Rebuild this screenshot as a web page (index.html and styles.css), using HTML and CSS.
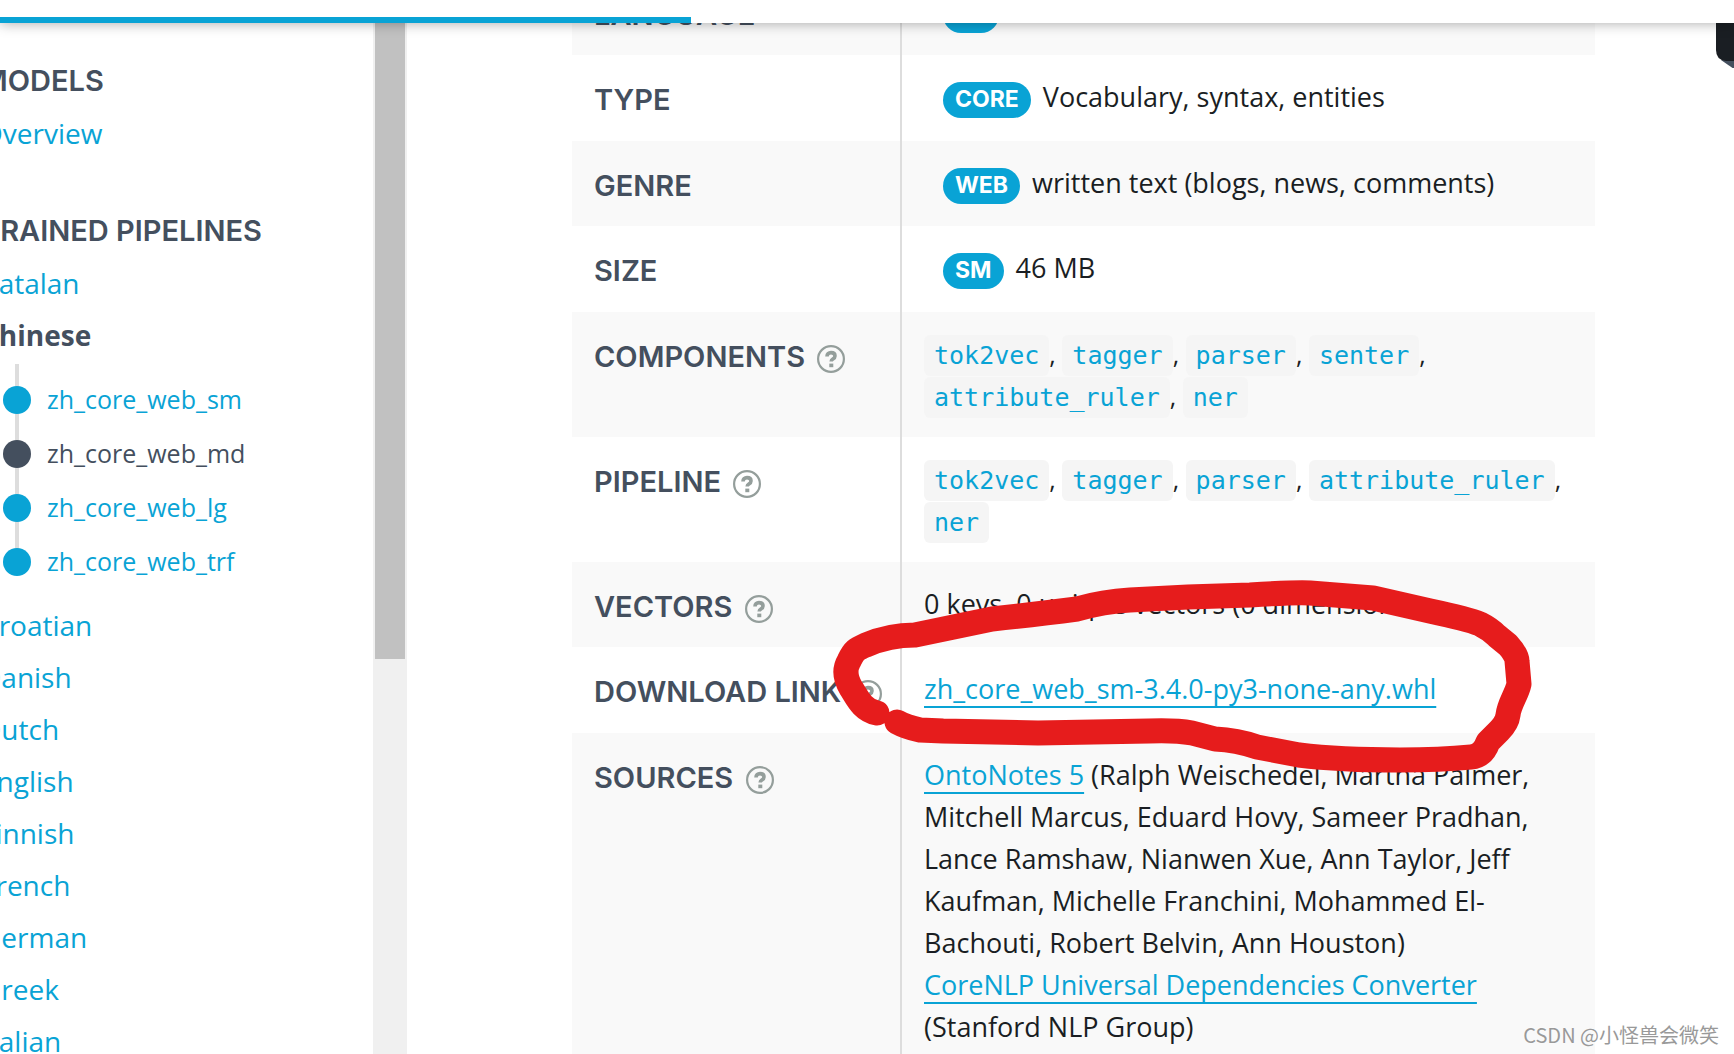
FILE: index.html
```html
<!DOCTYPE html>
<html lang="en">
<head>
<meta charset="utf-8">
<title>Chinese · spaCy Models Documentation</title>
<link rel="stylesheet" href="styles.css">
</head>
<body>
<svg class="defs" aria-hidden="true">
  <symbol id="help" viewBox="0 0 28 28">
    <circle cx="14" cy="14" r="12.9" fill="none" stroke="currentColor" stroke-width="2.2"/>
    <path d="M10 11.4c0-2.3 1.6-3.8 4-3.8s4 1.3 4 3.3c0 1.6-.9 2.4-2.1 3.2-1.2.8-1.7 1.2-1.7 2.5" fill="none" stroke="currentColor" stroke-width="3.6"/>
    <path d="M12.3 18.6h4v3.6h-4z" fill="currentColor"/>
  </symbol>
</svg>
<div class="page">
  <header class="header"><div class="progress"></div></header>
  <div class="body">
    <aside class="sidebar">
      <nav class="menu">
        <h2 class="menu-title">Models</h2>
        <ul class="menu-list">
          <li><a href="#overview">Overview</a></li>
        </ul>
        <h2 class="menu-title">Trained Pipelines</h2>
        <ul class="menu-list">
          <li><a href="#ca">Catalan</a></li>
          <li><a class="active" href="#zh">Chinese</a>
            <ul class="crumbs">
              <li><a href="#zh_core_web_sm">zh_core_web_sm</a></li>
              <li><a class="current" href="#zh_core_web_md">zh_core_web_md</a></li>
              <li><a href="#zh_core_web_lg">zh_core_web_lg</a></li>
              <li><a href="#zh_core_web_trf">zh_core_web_trf</a></li>
            </ul>
          </li>
          <li><a href="#hr">Croatian</a></li>
          <li><a href="#da">Danish</a></li>
          <li><a href="#nl">Dutch</a></li>
          <li><a href="#en">English</a></li>
          <li><a href="#fi">Finnish</a></li>
          <li><a href="#fr">French</a></li>
          <li><a href="#de">German</a></li>
          <li><a href="#el">Greek</a></li>
          <li><a href="#it">Italian</a></li>
        </ul>
      </nav>
      <div class="scrollbar"><div class="thumb"></div></div>
    </aside>
    <main class="main">
      <table class="table">
        <tbody>
        <tr><th scope="row">Language</th><td><span class="tag">ZH</span></td></tr>
        <tr><th scope="row">Type</th><td><span class="tag">Core</span> Vocabulary, syntax, entities</td></tr>
        <tr><th scope="row">Genre</th><td><span class="tag">Web</span> written text (blogs, news, comments)</td></tr>
        <tr><th scope="row">Size</th><td><span class="tag">SM</span> 46 MB</td></tr>
        <tr class="codes"><th scope="row">Components <svg class="help"><use href="#help"/></svg></th>
          <td><a href="#tok2vec"><code>tok2vec</code></a>, <a href="#tagger"><code>tagger</code></a>, <a href="#parser"><code>parser</code></a>, <a href="#senter"><code>senter</code></a>, <a href="#attribute_ruler"><code>attribute_ruler</code></a>, <a href="#ner"><code>ner</code></a></td></tr>
        <tr class="codes"><th scope="row">Pipeline <svg class="help"><use href="#help"/></svg></th>
          <td><a href="#tok2vec"><code>tok2vec</code></a>, <a href="#tagger"><code>tagger</code></a>, <a href="#parser"><code>parser</code></a>, <a href="#attribute_ruler"><code>attribute_ruler</code></a>, <a href="#ner"><code>ner</code></a></td></tr>
        <tr><th scope="row">Vectors <svg class="help"><use href="#help"/></svg></th><td>0 keys, 0 unique vectors (0 dimensions)</td></tr>
        <tr><th scope="row">Download Link <svg class="help"><use href="#help"/></svg></th><td><a class="link" href="#download">zh_core_web_sm-3.4.0-py3-none-any.whl</a></td></tr>
        <tr><th scope="row">Sources <svg class="help"><use href="#help"/></svg></th>
          <td><a class="link" href="#ontonotes">OntoNotes 5</a> (Ralph Weischedel, Martha Palmer, Mitchell Marcus, Eduard Hovy, Sameer Pradhan, Lance Ramshaw, Nianwen Xue, Ann Taylor, Jeff Kaufman, Michelle Franchini, Mohammed El-Bachouti, Robert Belvin, Ann Houston)<br><a class="link" href="#corenlp">CoreNLP Universal Dependencies Converter</a> (Stanford NLP Group)</td></tr>
        </tbody>
      </table>
      <svg class="marker" viewBox="820 570 724 210" aria-hidden="true">
        <path d="M877 713C862 710 857 697 851 688Q842 673 849 661C854 650 857 649 866 645Q889 635 915 635L992 619Q1038 614 1077 609C1098 603 1112 601 1130 600L1188 597L1250 595Q1299 592 1310 593L1373 598L1430 611Q1468 619 1480 624Q1490 629 1497 636L1508 645Q1517 655 1517 661L1519 684C1517 694 1509 704 1508 715Q1507 723 1499 731L1488 742Q1483 756 1471 757Q1440 760 1400 760Q1340 760 1299 755L1257 747Q1237 740 1215 739L1192 733Q1175 730 1149 731L1038 733L943 731L920 730Q906 727 897 722"/>
      </svg>
    </main>
  </div>
  <div class="ribbon"><svg viewBox="0 0 18 45"><path d="M5 37h13v9z" fill="#444f5e"/><path d="M0 0h18v38H10Q0 37 0 27z" fill="#1a1e23"/></svg></div>
  <div class="watermark">CSDN @小怪兽会微笑</div>
</div>
</body>
</html>
```
FILE: styles.css
```css
* { box-sizing: border-box; }

body {
  margin: 0;
  background: #fff;
  color: #1a1e23;
  font-family: "Open Sans", "Noto Sans", sans-serif;
  font-size: 27px;
  line-height: 42px;
}

a { color: #09a3d5; text-decoration: none; }
ul { list-style: none; margin: 0; padding: 0; }
.defs { display: none; }

.page {
  position: relative;
  display: flex;
  flex-direction: column;
  height: 100vh;
  overflow: hidden;
}

.header {
  flex: none;
  position: relative;
  z-index: 2;
  height: 23px;
  padding-top: 17px;
  background: #fff;
  box-shadow: 0 0 14px rgba(0, 0, 0, 0.35);
}
.progress { width: 691px; height: 6px; background: #09a3d5; }

.body { display: flex; flex: 1; min-height: 0; }

/* Sidebar */
.sidebar { display: flex; flex: none; width: 407px; overflow: hidden; }
.menu { flex: 1; margin-left: -19px; padding-top: 32px; }
.menu-title {
  margin: 0;
  color: #444f5e;
  font: 600 29px/52px Inter, sans-serif;
  text-transform: uppercase;
}
.menu-list { margin-bottom: 46px; font-size: 28px; line-height: 52px; }
.menu-list .active { color: #444f5e; font-weight: 700; }
.crumbs {
  position: relative;
  margin: 3px 0 11px 34px;
  padding: 8px 0 0 32px;
  font-size: 25px;
  line-height: 54px;
}
.crumbs::before {
  content: "";
  position: absolute;
  left: 0;
  top: 0;
  bottom: 27px;
  width: 4px;
  background: #ddd;
}
.crumbs a { position: relative; }
.crumbs a::before {
  content: "";
  position: absolute;
  left: -44px;
  top: 4px;
  width: 28px;
  height: 28px;
  border-radius: 50%;
  background: #09a3d5;
}
.crumbs .current { color: #444f5e; }
.crumbs .current::before { background: #444f5e; }

.scrollbar { flex: none; width: 34px; padding: 0 2px; background: #f0f0f0; }
.thumb { height: 636px; background: #c1c1c1; }

/* Model details */
.main { position: relative; flex: 1; padding: 0 139px 0 165px; }
.table { width: 100%; margin-top: -53px; border-collapse: collapse; }
.table tr:nth-child(odd) { background: #f9f9f9; }
.table td { padding: 21px 22px 23px; vertical-align: top; }
.table tr:nth-child(odd) td { padding-bottom: 22px; }
.table .codes td, .table .codes:nth-child(odd) td {
  padding-bottom: 20px;
  font-size: 25px;
}
.table th {
  width: 329px;
  padding: 24px 0 0 22px;
  border-right: 2px solid #ddd;
  color: #444f5e;
  font: 600 29px/42px Inter, sans-serif;
  text-align: left;
  text-transform: uppercase;
  vertical-align: top;
  white-space: nowrap;
}
.help {
  width: 28px;
  height: 28px;
  margin-left: 5px;
  vertical-align: -6px;
  color: #949e9b;
}
.tag {
  display: inline-block;
  margin: 0 5px 0 19px;
  padding: 0 12px 2px;
  border-radius: 18px;
  background: #09a3d5;
  color: #fff;
  font: 700 23px/34px Inter, sans-serif;
  text-transform: uppercase;
}
code {
  padding: 6px 10px;
  border-radius: 6px;
  background: #f5f5f5;
  font-family: "DejaVu Sans Mono", monospace;
  font-size: 25px;
  line-height: 30px;
}
.link {
  text-decoration: underline 2px;
  text-underline-offset: 7px;
  text-decoration-skip-ink: none;
}

.marker {
  position: absolute;
  left: 413px;
  top: 547px;
  width: 724px;
  height: 210px;
}
.marker path {
  fill: none;
  stroke: #e61c1c;
  stroke-width: 25px;
  stroke-linecap: round;
  stroke-linejoin: round;
}

.ribbon { position: absolute; top: 23px; right: 0; width: 18px; height: 45px; }
.ribbon svg { display: block; }
.watermark {
  position: absolute;
  right: 15px;
  bottom: 4px;
  color: #999;
  font: 20px/30px "Noto Sans CJK SC", sans-serif;
  text-shadow: 0 0 2px #fff;
}
```
